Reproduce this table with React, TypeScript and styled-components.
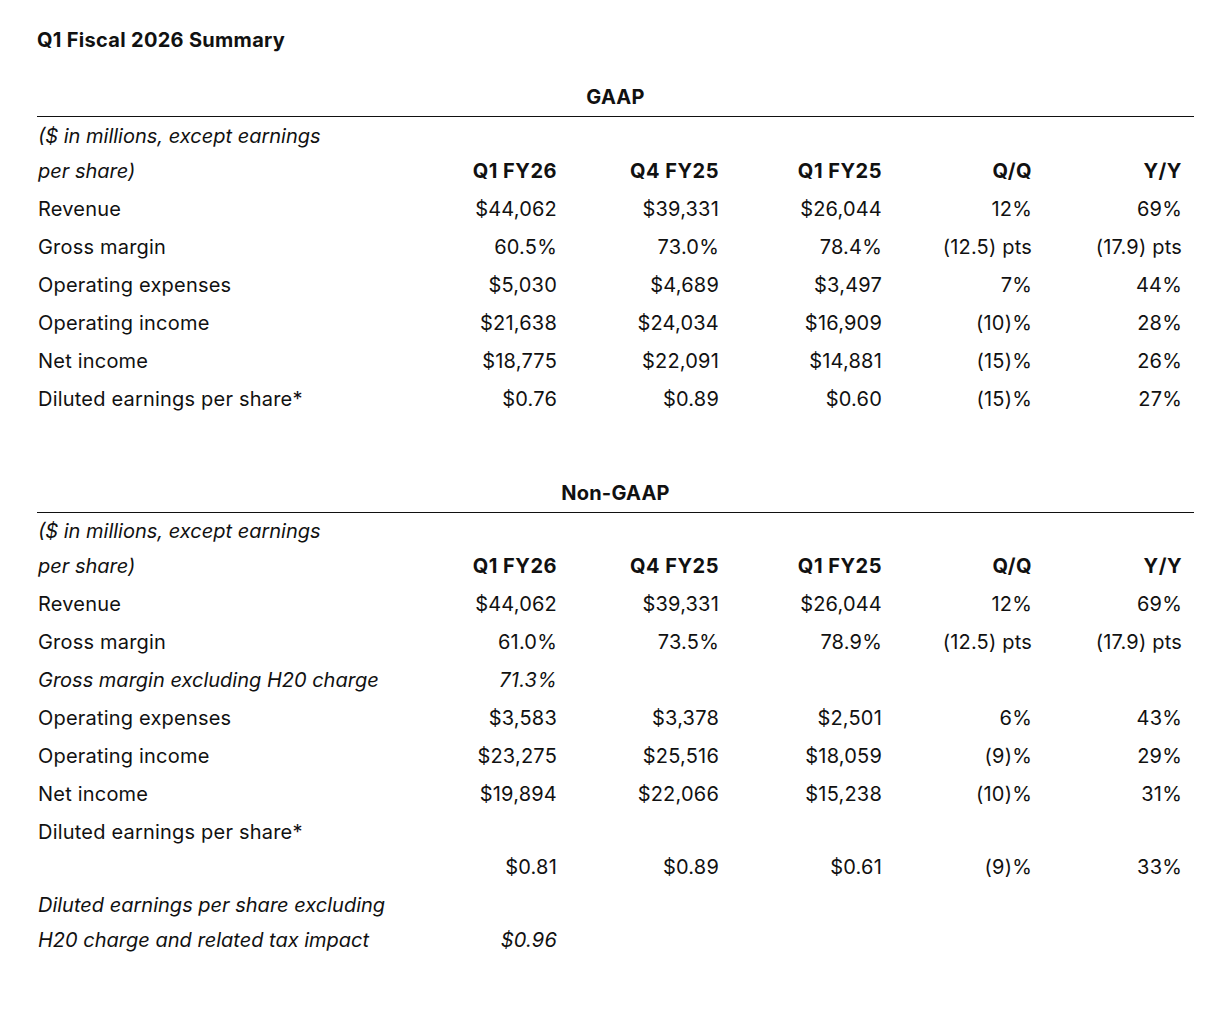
import { FC, Fragment } from "react";
import styled, { createGlobalStyle } from "styled-components";

const GlobalStyle = createGlobalStyle`
  body {
    margin: 0;
    background: #fff;
    color: #111;
    font-family: Inter, "Noto Sans", "Liberation Sans", sans-serif;
  }
`;

const Page = styled.div`
  padding: 28px 30px 40px 37px;
`;

const Title = styled.h1`
  margin: 0;
  font-size: 20px;
  line-height: 24px;
  font-weight: 700;
  letter-spacing: 0.3px;
`;

const Table = styled.table<{ $first?: boolean }>`
  width: 1157px;
  border-collapse: collapse;
  table-layout: fixed;
  font-size: 20px;
  letter-spacing: 0.2px;
  margin-top: ${({ $first }) => ($first ? "33px" : "62.5px")};
`;

const Col = styled.col<{ $w: number }>`
  width: ${({ $w }) => $w}px;
`;

const Caption = styled.th`
  font-weight: 700;
  text-align: center;
  line-height: 24px;
  padding: 0 0 7px;
  border-bottom: 1.5px solid #111;
`;

const Row = styled.tr``;

const Label = styled.td<{ $italic?: boolean; $tall?: boolean }>`
  padding: 1.5px 12px ${({ $tall }) => ($tall ? "36.5px" : "1.5px")} 1px;
  line-height: 35px;
  text-align: left;
  vertical-align: top;
  font-style: ${({ $italic }) => ($italic ? "italic" : "normal")};
  letter-spacing: ${({ $italic }) => ($italic ? "0" : "0.2px")};
`;

const Value = styled.td<{ $italic?: boolean }>`
  padding: 1.5px 12px 1.5px 0;
  line-height: 35px;
  text-align: right;
  vertical-align: bottom;
  font-style: ${({ $italic }) => ($italic ? "italic" : "normal")};
`;

const HeadValue = styled.th`
  padding: 1.5px 12px 1.5px 0;
  line-height: 35px;
  text-align: right;
  vertical-align: bottom;
  font-weight: 700;
  letter-spacing: 0.5px;
`;

type Line = {
  label: string[];
  values: string[];
  italic?: boolean;
  tall?: boolean;
};

const widths = [370, 162, 162, 163, 150, 150];
const columns = ["Q1 FY26", "Q4 FY25", "Q1 FY25", "Q/Q", "Y/Y"];
const unitNote = ["($ in millions, except earnings", "per share)"];

const gaap: Line[] = [
  { label: ["Revenue"], values: ["$44,062", "$39,331", "$26,044", "12%", "69%"] },
  { label: ["Gross margin"], values: ["60.5%", "73.0%", "78.4%", "(12.5) pts", "(17.9) pts"] },
  { label: ["Operating expenses"], values: ["$5,030", "$4,689", "$3,497", "7%", "44%"] },
  { label: ["Operating income"], values: ["$21,638", "$24,034", "$16,909", "(10)%", "28%"] },
  { label: ["Net income"], values: ["$18,775", "$22,091", "$14,881", "(15)%", "26%"] },
  { label: ["Diluted earnings per share*"], values: ["$0.76", "$0.89", "$0.60", "(15)%", "27%"] },
];

const nonGaap: Line[] = [
  { label: ["Revenue"], values: ["$44,062", "$39,331", "$26,044", "12%", "69%"] },
  { label: ["Gross margin"], values: ["61.0%", "73.5%", "78.9%", "(12.5) pts", "(17.9) pts"] },
  { label: ["Gross margin excluding H20 charge"], values: ["71.3%", "", "", "", ""], italic: true },
  { label: ["Operating expenses"], values: ["$3,583", "$3,378", "$2,501", "6%", "43%"] },
  { label: ["Operating income"], values: ["$23,275", "$25,516", "$18,059", "(9)%", "29%"] },
  { label: ["Net income"], values: ["$19,894", "$22,066", "$15,238", "(10)%", "31%"] },
  { label: ["Diluted earnings per share*"], values: ["$0.81", "$0.89", "$0.61", "(9)%", "33%"], tall: true },
  {
    label: ["Diluted earnings per share excluding", "H20 charge and related tax impact"],
    values: ["$0.96", "", "", "", ""],
    italic: true,
  },
];

const LabelText: FC<{ lines: string[] }> = ({ lines }) => (
  <>
    {lines.map((l, i) => (
      <Fragment key={l}>
        {i > 0 && <br />}
        {l}
      </Fragment>
    ))}
  </>
);

const Summary: FC<{ caption: string; lines: Line[]; first?: boolean }> = ({ caption, lines, first }) => (
  <Table $first={first}>
    <colgroup>
      {widths.map((w, i) => (
        <Col key={i} $w={w} />
      ))}
    </colgroup>
    <thead>
      <tr>
        <Caption colSpan={6}>{caption}</Caption>
      </tr>
    </thead>
    <tbody>
      <Row>
        <Label $italic>
          <LabelText lines={unitNote} />
        </Label>
        {columns.map((c) => (
          <HeadValue key={c}>{c}</HeadValue>
        ))}
      </Row>
      {lines.map((line) => (
        <Row key={line.label[0]}>
          <Label $italic={line.italic} $tall={line.tall}>
            <LabelText lines={line.label} />
          </Label>
          {line.values.map((v, i) => (
            <Value key={i} $italic={line.italic}>
              {v}
            </Value>
          ))}
        </Row>
      ))}
    </tbody>
  </Table>
);

export default function App() {
  return (
    <Page>
      <GlobalStyle />
      <Title>Q1 Fiscal 2026 Summary</Title>
      <Summary caption="GAAP" lines={gaap} first />
      <Summary caption="Non-GAAP" lines={nonGaap} />
    </Page>
  );
}
